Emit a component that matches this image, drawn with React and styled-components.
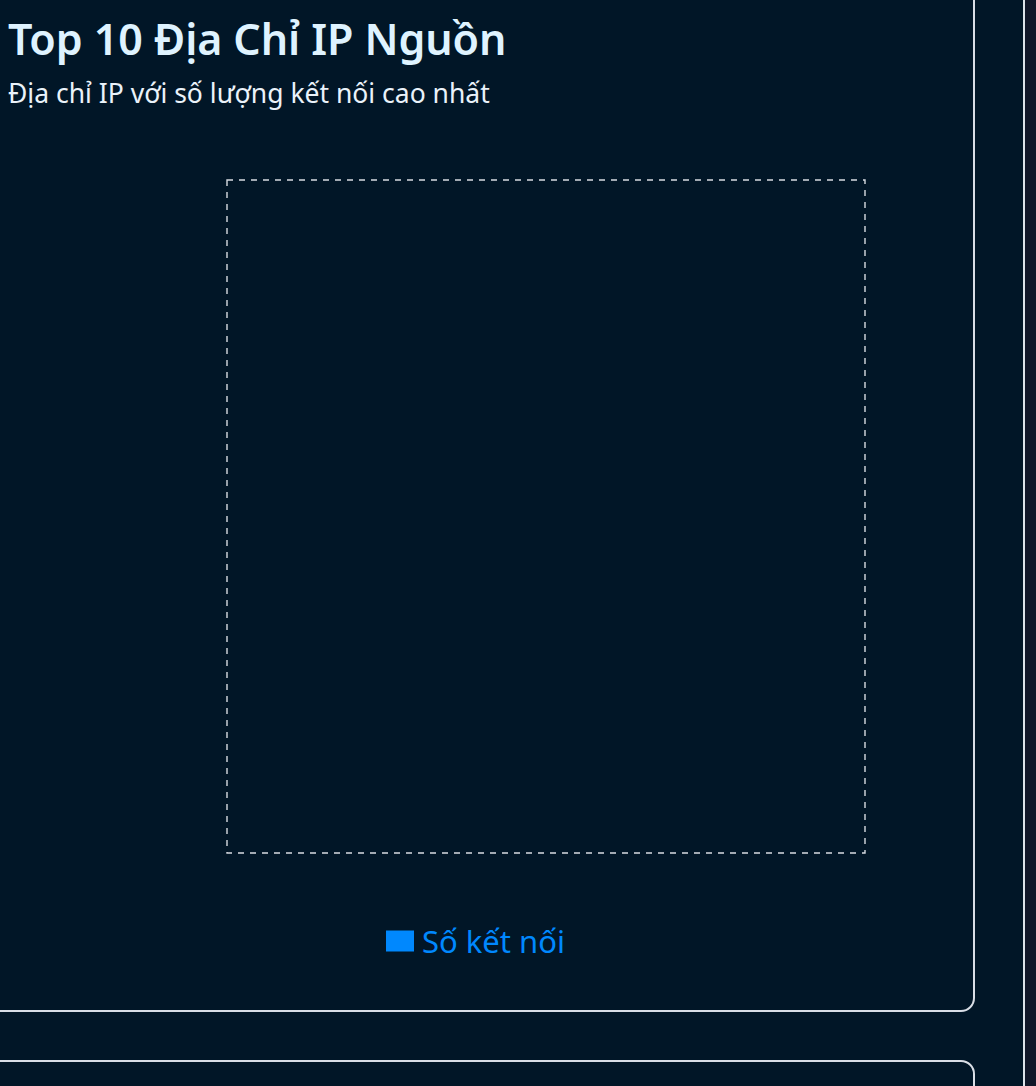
import React from "react";
import styled, { createGlobalStyle } from "styled-components";

const Global = createGlobalStyle`
  html, body { margin: 0; padding: 0; }
  body {
    background: #011627;
    font-family: "Noto Sans", "Open Sans", sans-serif;
    overflow: hidden;
    width: 1036px;
    height: 1086px;
  }
`;

const Page = styled.div`
  display: flex;
  width: 1036px;
  height: 1086px;
  overflow: hidden;
`;

const Main = styled.main`
  width: 1023px;
  flex: none;
  background: #011627;
  display: flex;
  flex-direction: column;
  gap: 48px;
`;

const Strip = styled.aside`
  flex: 1;
  border-left: 2px solid #dde3ea;
  background: #111729;
`;

const Card = styled.section`
  box-sizing: border-box;
  width: 999px;
  margin-left: -24px;
  margin-top: ${(p) => p.$top || 0}px;
  border: 2px solid #d9dee6;
  border-radius: 14px;
  padding: ${(p) => p.$pad || "30px"};
  flex: none;
  min-height: ${(p) => p.$minH || 0}px;
`;

const Title = styled.h3`
  margin: 0;
  font-size: 43px;
  line-height: 54px;
  font-weight: 600;
  color: #dff3ff;
  letter-spacing: -0.1px;
  white-space: nowrap;
`;

const Subtitle = styled.p`
  margin: 9px 0 0;
  font-size: 26.5px;
  line-height: 36px;
  color: #eaf2fa;
  white-space: nowrap;
`;

const Chart = styled.div`
  display: flex;
  flex-direction: column;
  margin-top: 68px;
`;

const Plot = styled.div`
  margin: 0 77px 0 218px;
  height: 675px;
  svg { display: block; }
`;

const Legend = styled.ul`
  list-style: none;
  margin: 68px 0 0;
  padding: 0;
  display: flex;
  justify-content: center;
`;

const LegendItem = styled.li`
  display: flex;
  align-items: center;
  gap: 8px;
  color: #0088fe;
  font-size: 31px;
  line-height: 38px;
  white-space: nowrap;
`;

export default function App() {
  return (
    <>
      <Global />
      <Page>
        <Main>
          <Card $top={-20} $pad="30px 30px 50px">
            <Title>Top 10 Địa Chỉ IP Nguồn</Title>
            <Subtitle>Địa chỉ IP với số lượng kết nối cao nhất</Subtitle>
            <Chart>
              <Plot>
                <svg width="100%" height="100%" viewBox="0 0 640 675" preserveAspectRatio="none">
                  <rect x="1" y="1" width="638" height="673" fill="none" stroke="#d8dce2" strokeWidth="1.4" strokeDasharray="6 6" />
                </svg>
              </Plot>
              <Legend>
                <LegendItem>
                  <svg width="28" height="28" viewBox="0 0 32 32">
                    <path d="M0,4h32v24h-32z" fill="#0088fe" />
                  </svg>
                  Số kết nối
                </LegendItem>
              </Legend>
            </Chart>
          </Card>
          <Card $minH={200} />
        </Main>
        <Strip />
      </Page>
    </>
  );
}
